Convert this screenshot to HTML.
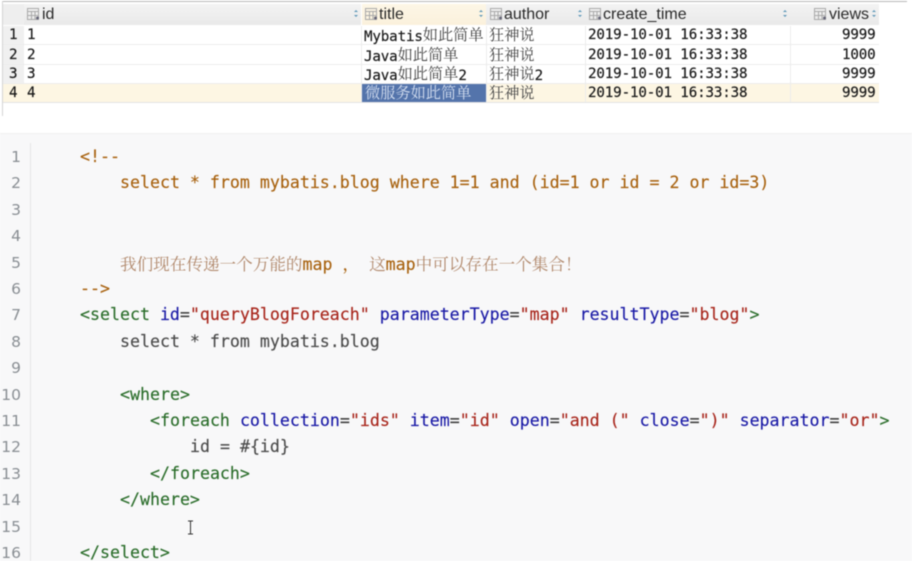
<!DOCTYPE html>
<html><head><meta charset="utf-8">
<style>
html,body{margin:0;padding:0;width:912px;height:561px;overflow:hidden;background:#fff}
#w{position:relative;width:912px;height:561px;overflow:hidden;filter:blur(.4px)}
.a{position:absolute}
.t{position:absolute;white-space:pre;font:14.2px/19px "DejaVu Sans Mono","Noto Serif CJK SC",monospace;color:#1a1a1a;letter-spacing:-.15px;-webkit-text-stroke:.2px #1a1a1a;transform:translateY(1px)}
.t i{font-style:normal;font-family:"Noto Serif CJK SC",serif;color:#444;font-weight:400;font-size:15.2px;letter-spacing:0;-webkit-text-stroke:0;position:relative;top:-1px}
.c i{font-style:normal;font-family:"Noto Serif CJK SC",serif;color:#b0876a;font-weight:400;-webkit-text-stroke:0}
.h{position:absolute;top:4px;height:21px;background:linear-gradient(#f3f3f3,#e9e9e9)}
.n{position:absolute;white-space:pre;font:16px/21px "Liberation Sans",sans-serif;color:#2a2a2a;top:4px}
.ln{position:absolute;left:0;width:21px;text-align:right;font:15.5px/26px "DejaVu Sans",sans-serif;color:#8a8f94}
.c{position:absolute;white-space:pre;font:16.6px/26px "DejaVu Sans Mono","Noto Serif CJK SC",monospace;letter-spacing:0;-webkit-text-stroke:.15px}
.o{color:#a8620f}.g{color:#2c6e2c}.b{color:#1a1aa6}.r{color:#a8261c}.k{color:#3a3a3a}
.p{color:#4c4c4c}
#code{position:absolute;left:0;top:1px;width:912px;height:561px}
</style></head><body><div id="w">
<div class="a" style="left:2px;top:1px;width:905px;height:1px;background:#b9b9b9"></div>
<div class="a" style="left:2px;top:1px;width:1px;height:115px;background:#d4d4d4"></div>

<div class="h" style="left:3px;width:21px;background:#eeeeee"></div>
<div class="h" style="left:24px;width:337px"></div>
<div class="h" style="left:362px;width:124px;background:linear-gradient(#fdf6e6,#fbf1dc)"></div>
<div class="h" style="left:486px;width:99px"></div>
<div class="h" style="left:585px;width:205px"></div>
<div class="h" style="left:790px;width:89px"></div>

<svg class="a" style="left:0;top:0" width="912" height="30" fill="none" stroke="#a9a9a9" stroke-width="1">
<g id="ic"><path d="M27.500 8.500h11v11h-11zM27.500 11.500h11M31.500 11.500v8M35 11.500v8M27.500 15.500h11"/><circle cx="37.500" cy="18" r="1.500" fill="#667" stroke="none"/></g>
<use href="#ic" x="338"/><use href="#ic" x="463"/><use href="#ic" x="562"/><use href="#ic" x="787"/>
<g fill="#5d97b8" stroke="none"><path d="M354 12l2-2 2 2zM354 15l2 2 2-2z"/><path d="M479 12l2-2 2 2zM479 15l2 2 2-2z"/><path d="M578 12l2-2 2 2zM578 15l2 2 2-2z"/><path d="M783 12l2-2 2 2zM783 15l2 2 2-2z"/><path d="M872 12l2-2 2 2zM872 15l2 2 2-2z"/></g>
</svg>
<div class="n" style="left:42px">id</div>
<div class="n" style="left:379px">title</div>
<div class="n" style="left:504px">author</div>
<div class="n" style="left:603px">create_time</div>
<div class="n" style="left:829px">views</div>

<!-- rows -->
<div class="a" style="left:3px;top:26px;width:21px;height:76px;background:#f0f0f0"></div>
<div class="a" style="left:3px;top:84px;width:876px;height:18px;background:#fdf6e3"></div>
<div class="a" style="left:3px;top:44px;width:876px;height:1px;background:#ececec"></div>
<div class="a" style="left:3px;top:64px;width:876px;height:1px;background:#ececec"></div>
<div class="a" style="left:3px;top:83px;width:876px;height:1px;background:#ececec"></div>
<div class="a" style="left:3px;top:102px;width:876px;height:1px;background:#e4e4e4"></div>
<div class="a" style="left:361px;top:26px;width:1px;height:76px;background:#ececec"></div>
<div class="a" style="left:486px;top:26px;width:1px;height:76px;background:#ececec"></div>
<div class="a" style="left:585px;top:26px;width:1px;height:76px;background:#ececec"></div>
<div class="a" style="left:790px;top:26px;width:1px;height:76px;background:#ececec"></div>
<div class="a" style="left:362px;top:84px;width:124px;height:18px;background:#5474ab"></div>

<div class="t" style="left:9px;top:25px">1</div><div class="t" style="left:27px;top:25px">1</div>
<div class="t" style="left:9px;top:45px">2</div><div class="t" style="left:27px;top:45px">2</div>
<div class="t" style="left:9px;top:64px">3</div><div class="t" style="left:27px;top:64px">3</div>
<div class="t" style="left:9px;top:83px">4</div><div class="t" style="left:27px;top:83px">4</div>

<div class="t" style="left:364px;top:25px">Mybatis<i>如此简单</i></div>
<div class="t" style="left:364px;top:45px">Java<i>如此简单</i></div>
<div class="t" style="left:364px;top:64px">Java<i>如此简单</i>2</div>
<div class="t" style="left:365px;top:83px"><i style="color:#d5dff0">微服务如此简单</i></div>

<div class="t" style="left:489px;top:25px"><i>狂神说</i></div>
<div class="t" style="left:489px;top:45px"><i>狂神说</i></div>
<div class="t" style="left:489px;top:64px"><i>狂神说</i>2</div>
<div class="t" style="left:489px;top:83px"><i>狂神说</i></div>

<div class="t" style="left:588px;top:25px">2019-10-01 16:33:38</div>
<div class="t" style="left:588px;top:45px">2019-10-01 16:33:38</div>
<div class="t" style="left:588px;top:64px">2019-10-01 16:33:38</div>
<div class="t" style="left:588px;top:83px">2019-10-01 16:33:38</div>

<div class="t" style="left:842px;top:25px">9999</div>
<div class="t" style="left:842px;top:45px">1000</div>
<div class="t" style="left:842px;top:64px">9999</div>
<div class="t" style="left:842px;top:83px">9999</div>

<!-- code -->
<div class="a" style="left:0;top:133px;width:912px;height:428px;background:#f8f8f9"></div>
<div class="a" style="left:0;top:133px;width:912px;height:1px;background:#f0f0f0"></div>
<div class="a" style="left:30px;top:143px;width:1px;height:418px;background:#e6e6e6"></div>

<div id="code">
<div class="ln" style="top:143px">1</div>
<div class="ln" style="top:169.4px">2</div>
<div class="ln" style="top:195.8px">3</div>
<div class="ln" style="top:222.2px">4</div>
<div class="ln" style="top:248.6px">5</div>
<div class="ln" style="top:275px">6</div>
<div class="ln" style="top:301.4px">7</div>
<div class="ln" style="top:327.8px">8</div>
<div class="ln" style="top:354.2px">9</div>
<div class="ln" style="top:380.6px">10</div>
<div class="ln" style="top:407px">11</div>
<div class="ln" style="top:433.4px">12</div>
<div class="ln" style="top:459.8px">13</div>
<div class="ln" style="top:486.2px">14</div>
<div class="ln" style="top:512.6px">15</div>
<div class="ln" style="top:539px">16</div>

<div class="c o" style="left:80px;top:143px">&lt;!--</div>
<div class="c o" style="left:120px;top:169.4px">select * from mybatis.blog where 1=1 and (id=1 or id = 2 or id=3)</div>
<div class="c o" style="left:120px;top:248.6px"><i>我们现在传递一个万能的</i>map ， <i>这</i>map<i>中可以存在一个集合</i><i>！</i></div>
<div class="c o" style="left:80px;top:275px">--&gt;</div>
<div class="c" style="left:80px;top:301.4px"><span class="g">&lt;select</span> <span class="b">id</span><span class="k">=</span><span class="r">"queryBlogForeach"</span> <span class="b">parameterType</span><span class="k">=</span><span class="r">"map"</span> <span class="b">resultType</span><span class="k">=</span><span class="r">"blog"</span><span class="g">&gt;</span></div>
<div class="c p" style="left:120px;top:327.8px">select * from mybatis.blog</div>
<div class="c g" style="left:120px;top:380.6px">&lt;where&gt;</div>
<div class="c" style="left:150px;top:407px"><span class="g">&lt;foreach</span> <span class="b">collection</span><span class="k">=</span><span class="r">"ids"</span> <span class="b">item</span><span class="k">=</span><span class="r">"id"</span> <span class="b">open</span><span class="k">=</span><span class="r">"and ("</span> <span class="b">close</span><span class="k">=</span><span class="r">")"</span> <span class="b">separator</span><span class="k">=</span><span class="r">"or"</span><span class="g">&gt;</span></div>
<div class="c p" style="left:190px;top:433.4px">id = #{id}</div>
<div class="c g" style="left:150px;top:459.8px">&lt;/foreach&gt;</div>
<div class="c g" style="left:120px;top:486.2px">&lt;/where&gt;</div>
<div class="c g" style="left:80px;top:539px">&lt;/select&gt;</div>
</div>

<svg class="a" style="left:186px;top:520px" width="10" height="16" fill="none" stroke="#333" stroke-width="1"><path d="M2 1h5M2 14h5M4.500 1v13"/></svg>
</div></body></html>
